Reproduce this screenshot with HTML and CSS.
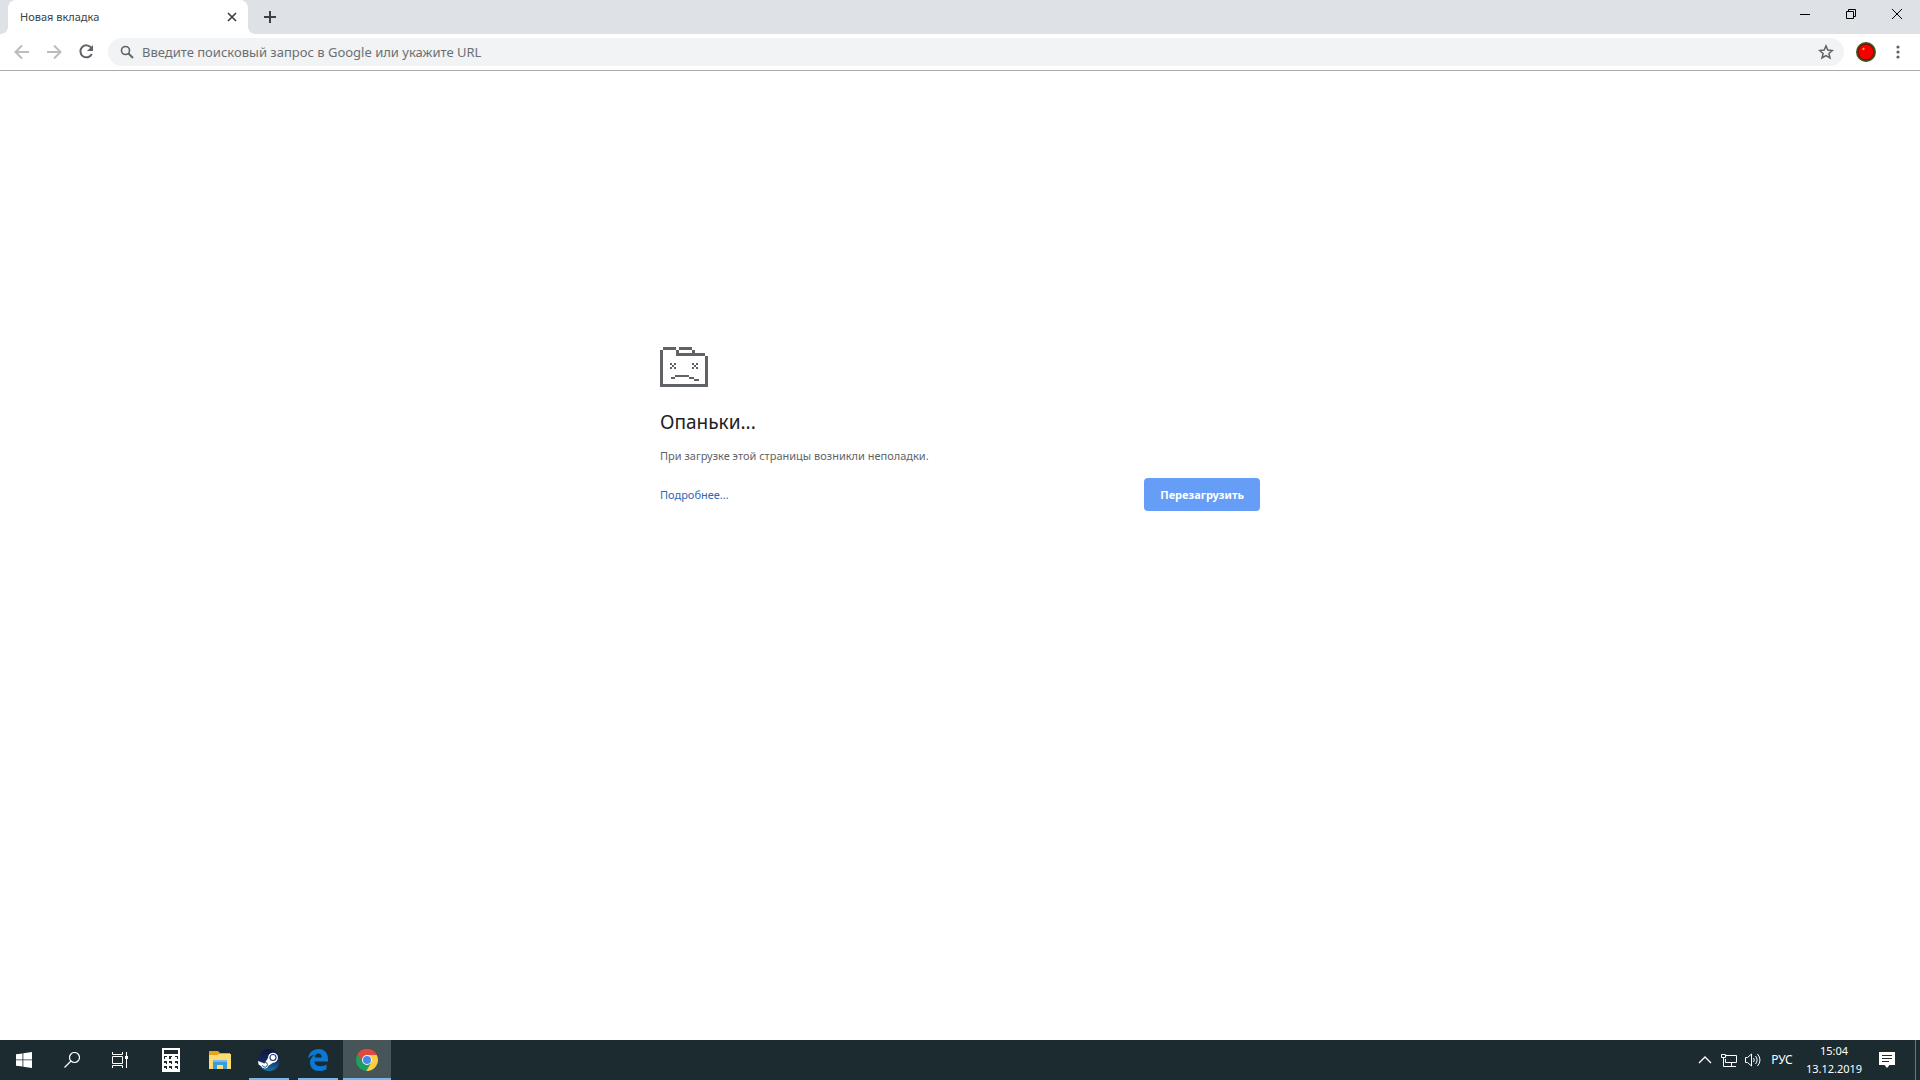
FILE: index.html
```html
<!DOCTYPE html>
<html lang="ru">
<head>
<meta charset="utf-8">
<title>Новая вкладка</title>
<link rel="stylesheet" href="styles.css">
</head>
<body>
<header class="browser">
  <div class="tabstrip">
    <div class="tab">
      <span class="tab-title">Новая вкладка</span>
      <button class="tab-close" aria-label="Закрыть вкладку"><svg width="10" height="10" viewBox="0 0 10 10"><path d="M1 1l8 8M9 1l-8 8" stroke="#3c4043" stroke-width="1.700"/></svg></button>
    </div>
    <button class="new-tab" aria-label="Новая вкладка"><svg width="12" height="12" viewBox="0 0 12 12"><path d="M6 0v12M0 6h12" stroke="#3c4043" stroke-width="2"/></svg></button>
    <div class="window-controls">
      <button aria-label="Свернуть"><svg width="10" height="10" viewBox="0 0 10 10"><path d="M0 5.5h10" stroke="#000"/></svg></button>
      <button aria-label="Восстановить"><svg width="10" height="10" viewBox="0 0 10 10"><path d="M.5 2.5h7v7h-7zM2.500 2.500V.5h7v7h-2" fill="none" stroke="#000"/></svg></button>
      <button aria-label="Закрыть"><svg width="10" height="10" viewBox="0 0 10 10"><path d="M0 0l10 10M10 0L0 10" stroke="#000"/></svg></button>
    </div>
  </div>
  <div class="toolbar">
    <button class="tool" aria-label="Назад"><svg width="16" height="16" viewBox="0 0 16 16"><path d="M15 8H2M8 1.500L1.500 8 8 14.500" fill="none" stroke="#babcbe" stroke-width="2"/></svg></button>
    <button class="tool" aria-label="Вперед"><svg width="16" height="16" viewBox="0 0 16 16"><path d="M1 8h13M8 1.500L14.500 8 8 14.500" fill="none" stroke="#babcbe" stroke-width="2"/></svg></button>
    <button class="tool" aria-label="Обновить"><svg width="16" height="16" viewBox="0 0 16 16"><path d="M13.400 4A6 6 0 1 0 13.800 10" fill="none" stroke="#5f6368" stroke-width="2"/><path d="M15 1v6H9z" fill="#5f6368"/></svg></button>
    <div class="omnibox">
      <svg width="14" height="14" viewBox="0 0 14 14"><circle cx="5.500" cy="5.500" r="4" fill="none" stroke="#5f6368" stroke-width="1.600"/><path d="M8.500 8.500L13 13" stroke="#5f6368" stroke-width="1.800"/></svg>
      <input class="address" type="text" aria-label="Адресная строка" placeholder="Введите поисковый запрос в Google или укажите URL">
      <button class="bookmark" aria-label="Добавить в закладки"><svg width="16" height="16" viewBox="0 0 16 16"><path d="M8 1.900l1.800 4.200 4.600.4-3.500 3 1.100 4.500L8 11.600 4 14l1.100-4.500-3.500-3 4.600-.4z" fill="none" stroke="#5f6368" stroke-width="1.500"/></svg></button>
    </div>
    <button class="profile" aria-label="Расширение"><svg width="20" height="20" viewBox="0 0 20 20"><circle cx="10" cy="10" r="9.200" fill="#7d0d08" stroke="#3e5a1c" stroke-width="1.600"/><circle cx="10" cy="10" r="7.300" fill="#f80000"/><circle cx="7.500" cy="7" r="1.200" fill="#ff7a20"/><circle cx="7.500" cy="6.800" r=".6" fill="#ffe060"/></svg></button>
    <button class="menu" aria-label="Меню"><svg width="4" height="14" viewBox="0 0 4 14"><g fill="#5f6368"><circle cx="2" cy="2" r="1.600"/><circle cx="2" cy="7" r="1.600"/><circle cx="2" cy="12" r="1.600"/></g></svg></button>
  </div>
</header>

<main class="page">
  <section class="crash">
    <svg class="crash-icon" width="48" height="40" viewBox="0 0 144 120" shape-rendering="crispEdges" aria-hidden="true"><path fill="#5f6368" d="M9 0h39v9H9zM57 0h39v9H57zM0 9h9v111H0zM48 9h9v9h78v9H48zM96 9h9v9h-9zM135 27h9v93h-9zM0 111h144v9H0z"/><path fill="#5f6368" d="M30 48h6v6h-6zM42 48h6v6h-6zM36 54h6v6h-6zM30 60h6v6h-6zM42 60h6v6h-6zM96 48h6v6h-6zM108 48h6v6h-6zM102 54h6v6h-6zM96 60h6v6h-6zM108 60h6v6h-6zM33 90h12v6H33zM45 84h42v6H45zM87 90h15v6H87zM102 96h15v6h-15z"/></svg>
    <h1>Опаньки...</h1>
    <p>При загрузке этой страницы возникли неполадки.</p>
    <div class="actions">
      <a href="#">Подробнее...</a>
      <button class="reload">Перезагрузить</button>
    </div>
  </section>
</main>

<footer class="taskbar">
  <div class="system-apps">
    <button aria-label="Пуск"><svg width="16" height="16" viewBox="0 0 16 16"><path fill="#fff" d="M0 2.300L6.500 1.400V7.500H0zM7.300 1.300L16 0v7.500H7.300zM0 8.300h6.500v6.300L0 13.700zM7.300 8.300H16V16l-8.700-1.300z"/></svg></button>
    <button aria-label="Поиск"><svg width="16" height="16" viewBox="0 0 16 16"><circle cx="10.500" cy="5.500" r="5" fill="none" stroke="#fff" stroke-width="1.200"/><path d="M7 9L.5 15.500" stroke="#fff" stroke-width="1.300"/></svg></button>
    <button aria-label="Представление задач"><svg width="16" height="16" viewBox="0 0 16 16"><path fill="none" stroke="#fff" d="M.5 4.500h10v7H.5zM.5 0v2.500h10V0M.5 16v-2.500h10V16M14.500 0v16"/><path fill="#fff" d="M13 4h3v3h-3z"/></svg></button>
  </div>
  <div class="apps">
    <button aria-label="Калькулятор"><svg width="18" height="24" viewBox="0 0 18 24"><path fill="#fff" d="M0 0h18v24H0z"/><path fill="#1b2b30" d="M2 2h14v4H2zM2 8h3v1H3v2H2zM7 8h3v1H9v2H7zM13 8h3v3h-1V9h-2zM2 13h3v3H4v-1H2zM7 13h3v3H9v-1H7zM13 13h3v3h-1v-1h-2zM2 18h3v3H4v-1H2zM7 18h3v3H9v-1H7zM13 18h3v3h-1v-1h-2z"/></svg></button>
    <button aria-label="Проводник"><svg width="22" height="18" viewBox="0 0 22 18"><path fill="#e5a51b" d="M0 0h9l2 2h10v5H0z"/><path fill="#fddc74" d="M0 4h8l2-1h12v15H0z"/><path fill="#3b9bdc" d="M4 9h14v9h-4v-4H8v4H4z"/><path fill="#72bceb" d="M4 9h14v2H4z"/></svg></button>
    <button class="open" aria-label="Steam"><svg width="22" height="22" viewBox="0 0 22 22"><defs><linearGradient id="steam" x1="0" y1="0" x2="0" y2="1"><stop offset="0" stop-color="#10143a"/><stop offset=".5" stop-color="#13275a"/><stop offset="1" stop-color="#1478ad"/></linearGradient></defs><circle cx="11" cy="11" r="11" fill="url(#steam)"/><path fill="#fff" d="M0 12l6.500 2.400L10 9a5 5 0 1 1 5 4.700l-4.500 3A4 4 0 0 1 3 17l-2.500-1.500z"/><circle cx="15" cy="8.500" r="3" fill="#fff" stroke="#253d66" stroke-width="1.200"/><path d="M4.500 16.200a2.500 2.500 0 1 0 2.600-3" fill="none" stroke="#344d72"/></svg></button>
    <button class="open" aria-label="Microsoft Edge"><svg width="20" height="22" viewBox="0 0 20 22"><path fill="#0a78d4" d="M0 9.500C1 3.500 5 0 10.500 0 17 0 20 4.500 20 10v2.500H6.500c.2 3 2.500 4.700 6 4.700 2.300 0 4.500-.7 6-1.700v4.700C16.700 21.400 14.300 22 11.500 22 5.500 22 2 18.500 2 13.500c0-3.500 2-6.300 5-7.800C4 6 1.500 7.500 0 9.500zm6.700-1h7.100C13.800 6 12.500 4.500 10.300 4.500S6.900 6.200 6.700 8.500z"/></svg></button>
    <button class="open active" aria-label="Google Chrome"><svg width="22" height="22" viewBox="0 0 22 22"><path fill="#dd4b3e" d="M11 11L1.500 5.500a11 11 0 0 1 19 0z"/><path fill="#dd4b3e" d="M1.500 5.500L6.700 13.500 11 6h9.700A11 11 0 0 0 1.500 5.500z"/><path fill="#1aa15f" d="M1.500 5.500A11 11 0 0 0 11 22l4.500-8.500L6.700 13.500z"/><path fill="#ffce44" d="M11 6h9.700A11 11 0 0 1 10.300 22l5-8.500z"/><circle cx="11" cy="11" r="5" fill="#f4f4f4"/><circle cx="11" cy="11" r="4" fill="#4688f1"/></svg></button>
  </div>
  <div class="tray">
    <button class="tray-icon" aria-label="Показать скрытые значки"><svg width="14" height="8" viewBox="0 0 14 8"><path d="M1 7l6-6 6 6" fill="none" stroke="#fff" stroke-width="1.300"/></svg></button>
    <button class="tray-icon" aria-label="Сеть"><svg width="16" height="14" viewBox="0 0 16 14"><path d="M5 2.500h10.500v7h-11V6M10.500 9.500v4M6 13.500h9M.5 1.500h4v3h-4zM2.500 4.500v9H6" fill="none" stroke="#fff"/></svg></button>
    <button class="tray-icon" aria-label="Громкость"><svg width="16" height="14" viewBox="0 0 16 14"><path d="M.5 4.500h2L6.500 1v12l-4-3.500h-2zM8.500 5q1.600 2 0 4M10.500 3q3.200 4 0 8M12.500 1q5 6 0 12" fill="none" stroke="#fff"/></svg></button>
    <button class="language">РУС</button>
    <button class="clock"><time>15:04</time><time>13.12.2019</time></button>
    <button class="notifications" aria-label="Центр уведомлений"><svg width="16" height="16" viewBox="0 0 16 16"><path fill="#fff" d="M0 0h16v13h-5.500L8 16l-2.500-3H0z"/><path d="M3 3.500h10M3 6.500h10M3 9.500h7" stroke="#1b2b30"/></svg></button>
    <button class="show-desktop" aria-label="Показать рабочий стол"></button>
  </div>
</footer>
</body>
</html>
```
FILE: styles.css
```css
* { box-sizing: border-box; }

body {
  display: flex;
  flex-direction: column;
  min-height: 100vh;
  margin: 0;
  background: #fff;
  color: #5f6368;
  font: 11px/16px "Noto Sans", "Open Sans", sans-serif;
}

button {
  display: flex;
  align-items: center;
  justify-content: center;
  margin: 0;
  padding: 0;
  border: 0;
  background: none;
  color: inherit;
  font: inherit;
}

svg { display: block; flex: none; }

.browser { border-bottom: 1px solid #a9abad; }

.tabstrip {
  display: flex;
  height: 34px;
  padding-left: 8px;
  background: #dee1e6;
}

.tab {
  position: relative;
  display: flex;
  align-items: center;
  justify-content: space-between;
  width: 240px;
  padding: 0 8px 0 12px;
  border-radius: 8px 8px 0 0;
  background: #fff;
  color: #3c4043;
}

.tab::before,
.tab::after {
  content: "";
  position: absolute;
  bottom: 0;
  width: 8px;
  height: 8px;
}

.tab::before {
  right: 100%;
  background: radial-gradient(circle at 0 0, transparent 8px, #fff 8px);
}

.tab::after {
  left: 100%;
  background: radial-gradient(circle at 100% 0, transparent 8px, #fff 8px);
}

.tab-close { width: 16px; height: 16px; }

.new-tab { width: 28px; margin-left: 8px; }

.window-controls { display: flex; height: 28px; margin-left: auto; }
.window-controls button { width: 46px; }

.toolbar {
  display: flex;
  align-items: center;
  height: 36px;
  padding: 0 12px 0 6px;
}

.tool { width: 32px; height: 32px; }

.omnibox {
  display: flex;
  flex: 1;
  align-items: center;
  height: 28px;
  margin-left: 6px;
  padding: 0 10px 0 12px;
  border-radius: 14px;
  background: #f1f3f4;
}

.address {
  flex: 1;
  min-width: 0;
  padding: 0 8px;
  border: 0;
  outline: 0;
  background: none;
  color: #5f6368;
  font: 13px/20px "Noto Sans", "Open Sans", sans-serif;
}

.address::placeholder { color: #6b6f73; opacity: 1; }

.profile { width: 44px; height: 28px; }
.menu { width: 20px; height: 28px; }

.page {
  flex: 1;
  padding: 276px 24px 24px;
}

.crash { max-width: 600px; margin: 0 auto; }

.crash h1 {
  margin: 20px 0 11px;
  color: #202124;
  font-size: 19px;
  font-weight: 400;
  line-height: 30px;
}

.crash p { margin: 0 0 14px; }

.actions {
  display: flex;
  align-items: center;
  justify-content: space-between;
}

.actions a { color: #3367b5; text-decoration: none; }

.reload {
  height: 33px;
  padding: 0 16px;
  border-radius: 4px;
  background: #669df6;
  color: #fff;
  font-weight: 700;
}

.taskbar {
  display: flex;
  justify-content: space-between;
  height: 40px;
  background: #1b2b30;
  color: #fff;
}

.system-apps, .apps, .tray { display: flex; }
.system-apps button, .apps button { width: 48px; height: 40px; }
.apps { gap: 1px; margin-left: 3px; }

.open { position: relative; }

.open::after {
  content: "";
  position: absolute;
  right: 4px;
  bottom: 0;
  left: 4px;
  height: 2px;
  background: #76b9ed;
}

.active { background: #475559; }
.active::after { right: 0; left: 0; }

.tray { margin-left: auto; }
.tray-icon { width: 24px; }
.language { width: 34px; font-size: 12px; }
.clock { flex-direction: column; width: 70px; line-height: 18px; }
.notifications { width: 36px; }
.show-desktop { width: 5px; margin-left: 10px; border-left: 1px solid #6b777b; }
```
